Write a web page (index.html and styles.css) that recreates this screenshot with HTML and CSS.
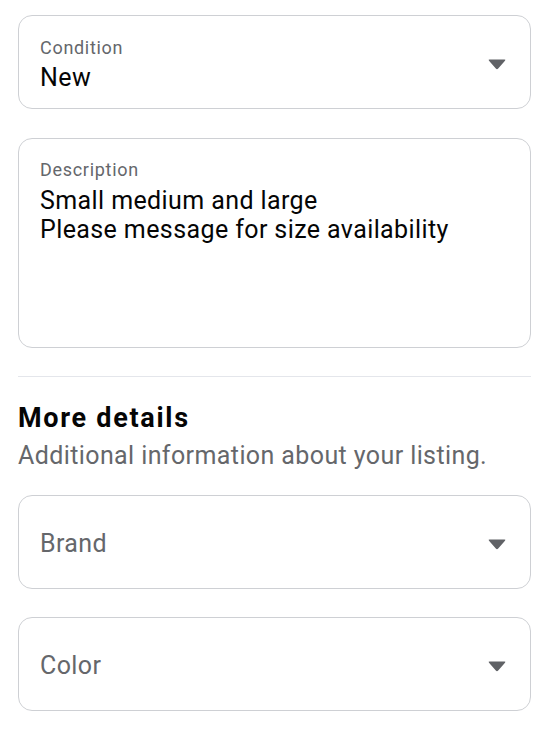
FILE: index.html
```html
<!DOCTYPE html>
<html lang="en">
<head>
    <meta charset="UTF-8">
    <meta name="viewport" content="width=device-width, initial-scale=1.0">
    <title>Listing details</title>
    <link rel="stylesheet" href="styles.css">
</head>
<body>
    <main class="form">
        <div class="field select-field">
            <div class="field-text">
                <span class="field-label">Condition</span>
                <span class="field-value">New</span>
            </div>
            <svg class="caret" width="18" height="11" viewBox="0 0 18 11">
                <path d="M1.5 0.5 H16.5 Q18 0.5 17 1.8 L10.2 9.6 Q9 11 7.8 9.6 L1 1.8 Q0 0.5 1.5 0.5 Z" fill="#606266"/>
            </svg>
        </div>

        <div class="field textarea-field">
            <span class="field-label">Description</span>
            <span class="field-value">Small medium and large<br>Please message for size availability</span>
        </div>

        <hr class="divider">

        <section class="section-head">
            <h2>More details</h2>
            <p>Additional information about your listing.</p>
        </section>

        <div class="field select-field empty">
            <span class="placeholder">Brand</span>
            <svg class="caret" width="18" height="11" viewBox="0 0 18 11">
                <path d="M1.5 0.5 H16.5 Q18 0.5 17 1.8 L10.2 9.6 Q9 11 7.8 9.6 L1 1.8 Q0 0.5 1.5 0.5 Z" fill="#606266"/>
            </svg>
        </div>

        <div class="field select-field empty">
            <span class="placeholder">Color</span>
            <svg class="caret" width="18" height="11" viewBox="0 0 18 11">
                <path d="M1.5 0.5 H16.5 Q18 0.5 17 1.8 L10.2 9.6 Q9 11 7.8 9.6 L1 1.8 Q0 0.5 1.5 0.5 Z" fill="#606266"/>
            </svg>
        </div>
    </main>
</body>
</html>
```

FILE: styles.css
```css
body {
    font-family: Roboto, "Noto Sans", Arial, sans-serif;
    margin: 0;
    padding: 0;
    background-color: #ffffff;
    color: #050505;
}

.form {
    padding: 15px 19px 0 18px;
    display: flex;
    flex-direction: column;
}

.field {
    border: 1px solid #ced0d4;
    border-radius: 14px;
    box-sizing: border-box;
    padding: 0 20px 0 21px;
}

.select-field {
    height: 94px;
    display: flex;
    align-items: center;
    justify-content: space-between;
    margin-bottom: 28px;
}

.select-field:first-child {
    margin-bottom: 29px;
}

.field-text {
    align-self: flex-start;
    display: flex;
    flex-direction: column;
    padding-top: 21px;
}

.field-label {
    font-size: 18px;
    line-height: 22px;
    letter-spacing: 0.7px;
    color: #65676b;
}

.field-value {
    font-size: 25px;
    line-height: 29px;
    letter-spacing: 0.4px;
    color: #050505;
    margin-top: 4px;
}

.caret {
    margin-right: 4px;
    margin-top: 4px;
}

.textarea-field {
    height: 210px;
    display: flex;
    flex-direction: column;
    padding-top: 20px;
}

.textarea-field .field-value {
    margin-top: 5px;
}

.divider {
    border: none;
    border-top: 1px solid #e4e6eb;
    margin: 28px 0 0;
}

.section-head {
    padding-top: 25px;
    margin-bottom: 24px;
}

.section-head h2 {
    font-size: 27px;
    line-height: 32px;
    letter-spacing: 1.7px;
    font-weight: bold;
    margin: 0;
}

.section-head p {
    font-size: 25px;
    line-height: 30px;
    letter-spacing: 0.4px;
    color: #65676b;
    margin: 7px 0 0;
}

.placeholder {
    font-size: 25px;
    letter-spacing: 0.4px;
    color: #65676b;
    padding-top: 3px;
}
```
